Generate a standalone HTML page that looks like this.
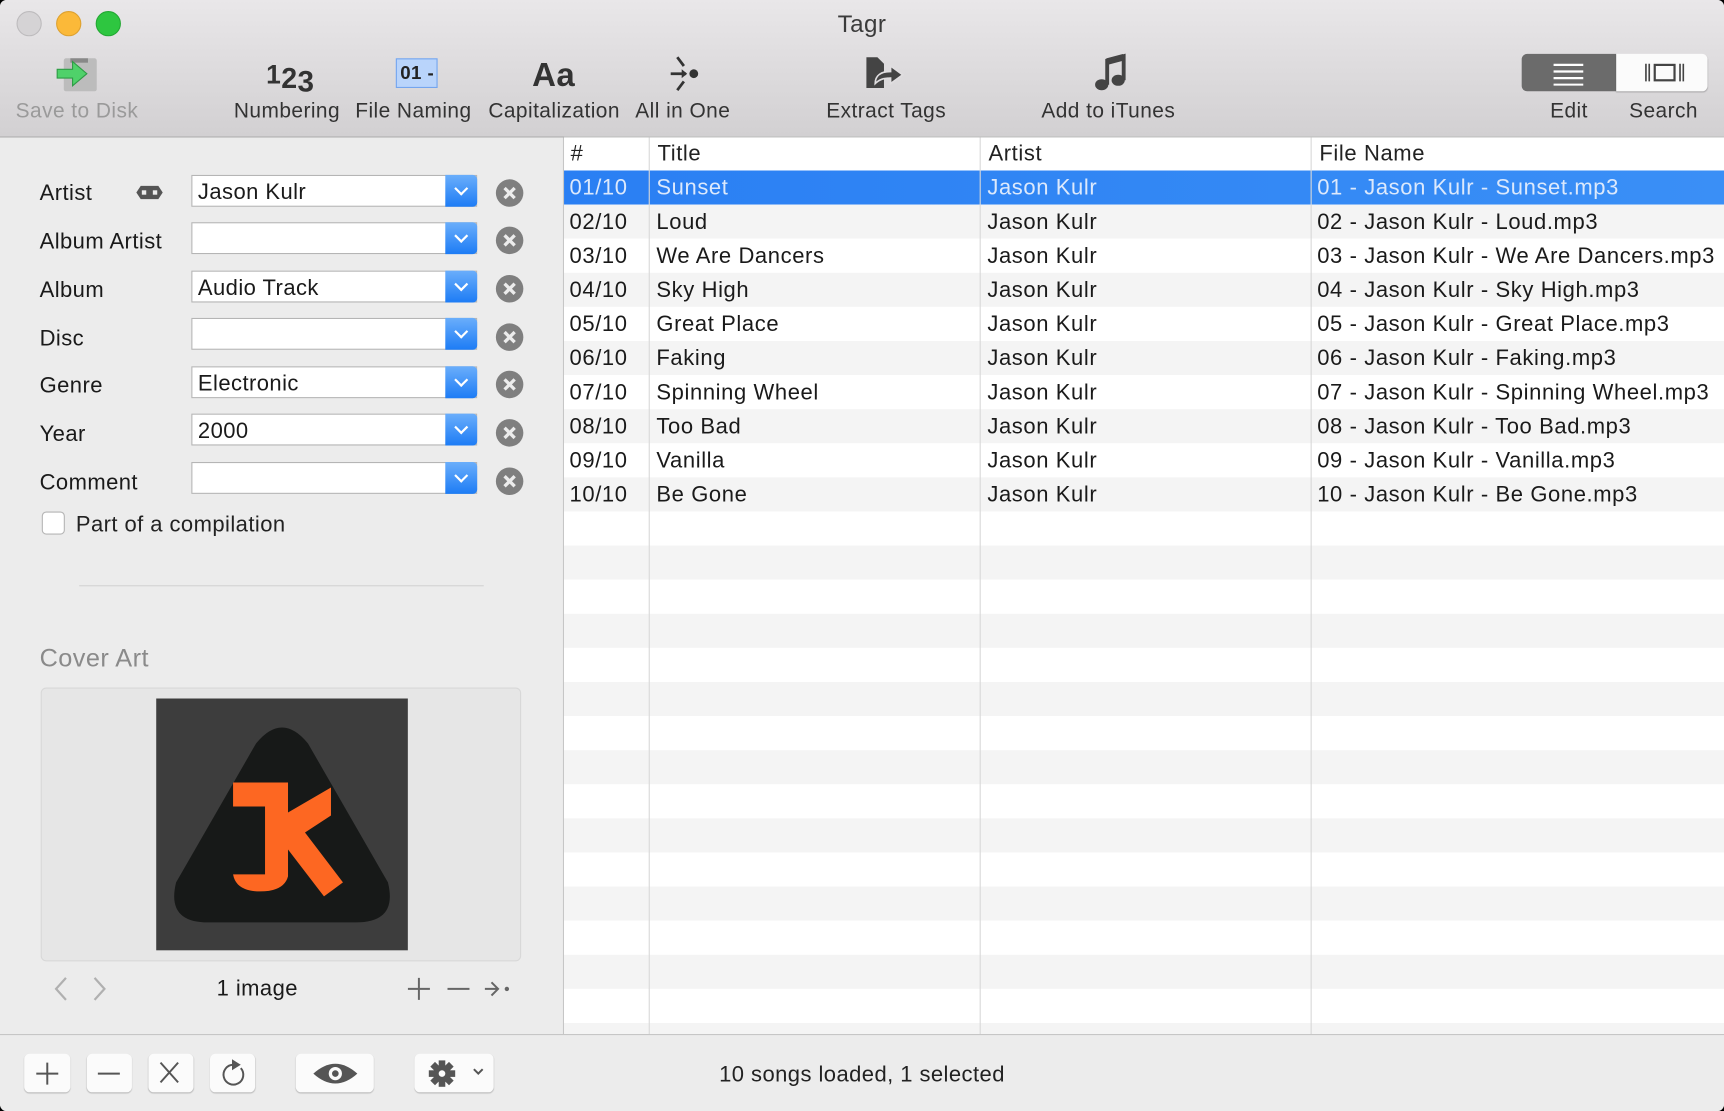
<!DOCTYPE html>
<html><head><meta charset="utf-8"><style>
html,body{margin:0;padding:0;background:#000;overflow:hidden;width:1724px;height:1111px}
#w{position:absolute;left:0;top:0;width:1568px;height:1010px;transform:scale(1.09949,1.1);transform-origin:0 0;background:#ececec;font-family:"Liberation Sans",sans-serif;color:#1a1a1a;overflow:hidden;border-radius:6px 6px 6px 6px;letter-spacing:0.4px}
.a{position:absolute}
#tb{left:0;top:0;width:1568px;height:124px;background:linear-gradient(#e9e7e9,#d2d0d2);border-bottom:1px solid #adadad}
.light{width:22px;height:22px;border-radius:50%;top:10px}
.tl{font-size:19px;color:#333;text-align:center;white-space:nowrap}
.lbl{font-size:20px;left:36px}
.fld{left:174px;width:260px;height:29px;background:#fff;border:1px solid #b5b5b5;box-sizing:border-box;font-size:20px;line-height:31px;padding-left:5px}
.drop{position:absolute;right:-1px;top:-1px;width:29px;height:29px;border-radius:0 4px 4px 0;background:linear-gradient(#6aaefb,#1d7cf5)}
.drop:after{content:"";position:absolute;left:10px;top:8px;width:7px;height:7px;border-right:2px solid #fff;border-bottom:2px solid #fff;transform:rotate(45deg)}
.clr{left:451px;width:25px;height:25px;border-radius:50%;background:#7f7f7f}
.clr:before,.clr:after{content:"";position:absolute;left:6px;top:11px;width:13px;height:3px;background:#ececec;transform:rotate(45deg)}
.clr:after{transform:rotate(-45deg)}
.row{position:absolute;left:513px;width:1055px;height:31px;font-size:20px;line-height:33px;white-space:nowrap;letter-spacing:0.55px}
.row span{position:absolute;top:0}
.vl{position:absolute;top:125px;width:1px;height:815px;background:#d8d8d8}
.bb{top:958px;height:35px;background:#fbfbfb;border-radius:5px;box-shadow:0 1px 1px rgba(0,0,0,.2)}
</style></head><body><div id="w">
<div id="tb" class="a"></div>
<div class="a light" style="left:15px;background:#d5d3d5;border:1px solid #bdbbbd;width:21px;height:21px"></div>
<div class="a light" style="left:51px;background:#fbb939;border:1px solid #dda130;width:21px;height:21px"></div>
<div class="a light" style="left:87px;background:#2ec640;border:1px solid #23a833;width:21px;height:21px"></div>
<div class="a" style="left:0;width:1568px;top:9px;text-align:center;font-size:22px;color:#3b3b3b">Tagr</div>
<svg class="a" style="left:50px;top:50px" width="42" height="36"><rect x="8" y="3" width="30" height="30" rx="2" fill="#bcbcbc"/><rect x="14" y="3" width="16" height="4" fill="#888"/><path d="M2 13h14v-7l13 11-13 11v-7H2z" fill="#4fd16a" stroke="#2e9b45"/></svg>
<div class="a" style="left:242px;top:52px;font-size:24px;color:#333;font-weight:bold">1<span style="font-size:26px;position:relative;top:4px">2</span><span style="font-size:27px;position:relative;top:7px">3</span></div>
<div class="a" style="left:360px;top:53px;width:38px;height:27px;background:#b9d4fb;border:1px solid #74a5ee;box-sizing:border-box;font-size:17px;line-height:25px;padding-left:3px;font-weight:bold;color:#222">01 -</div>
<div class="a" style="left:484px;top:52px;font-size:30px;font-weight:bold;color:#333">Aa</div>
<svg class="a" style="left:606px;top:48px" width="32" height="38"><path d="M10 4l6 8M10 34l6-8M4 19h14" stroke="#333" stroke-width="2.5" fill="none"/><path d="M14 15l5 4-5 4z" fill="#333"/><circle cx="25" cy="19" r="4" fill="#333"/></svg>
<svg class="a" style="left:786px;top:50px" width="40" height="32"><path d="M2 2h10l6 6v22H2z" fill="#444"/><path d="M10 26c0-8 6-11 14-11v-5l11 8-11 8v-5c-6 0-10 1-14 5z" fill="#444" stroke="#e0dee0" stroke-width="1.5"/></svg>
<svg class="a" style="left:992px;top:48px" width="36" height="36"><path d="M15 29V7l15-4v22" stroke="#444" stroke-width="3.5" fill="none"/><path d="M15 8l15-4" stroke="#444" stroke-width="6"/><ellipse cx="10" cy="29" rx="6" ry="5" fill="#444"/><ellipse cx="25" cy="25" rx="6" ry="5" fill="#444"/></svg>
<div class="a tl" style="left:0;width:140px;top:91px;color:#9a9a9a">Save to Disk</div>
<div class="a tl" style="left:201px;width:120px;top:91px">Numbering</div>
<div class="a tl" style="left:316px;width:120px;top:91px">File Naming</div>
<div class="a tl" style="left:434px;width:140px;top:91px">Capitalization</div>
<div class="a tl" style="left:566px;width:110px;top:91px">All in One</div>
<div class="a tl" style="left:736px;width:140px;top:91px">Extract Tags</div>
<div class="a tl" style="left:938px;width:140px;top:91px">Add to iTunes</div>
<div class="a" style="left:1384px;top:49px;width:86px;height:34px;background:#6b6b6b;border-radius:5px 0 0 5px"></div>
<div class="a" style="left:1470px;top:49px;width:83px;height:34px;background:#fbfbfb;border-radius:0 5px 5px 0;box-shadow:0 1px 1px rgba(0,0,0,.2)"></div>
<svg class="a" style="left:1412px;top:56px" width="30" height="22"><path d="M1 3h27M1 9h27M1 15h27M1 21h27" stroke="#fff" stroke-width="2"/></svg>
<svg class="a" style="left:1496px;top:56px" width="36" height="20"><path d="M1 2v16M4 2v16M32 2v16M35 2v16" stroke="#444" stroke-width="1.5"/><rect x="9" y="3" width="18" height="14" fill="none" stroke="#444" stroke-width="2"/></svg>
<div class="a tl" style="left:1384px;width:86px;top:91px">Edit</div>
<div class="a tl" style="left:1470px;width:86px;top:91px">Search</div>

<div class="a" style="left:512px;top:125px;width:1px;height:815px;background:#c6c6c6"></div>
<div class="a lbl" style="top:165px">Artist</div>
<svg class="a" style="left:121px;top:166px" width="30" height="18"><path d="M3 9l4-6h16l4 6-4 6H7z" fill="#555"/><rect x="8" y="7" width="14" height="4" fill="#ececec"/><rect x="12" y="5" width="6" height="8" fill="#555"/></svg>
<div class="a lbl" style="top:209px">Album Artist</div>
<div class="a lbl" style="top:253px">Album</div>
<div class="a lbl" style="top:297px">Disc</div>
<div class="a lbl" style="top:340px">Genre</div>
<div class="a lbl" style="top:384px">Year</div>
<div class="a lbl" style="top:428px">Comment</div>
<div class="a fld" style="top:159px">Jason Kulr<div class="drop"></div></div>
<div class="a fld" style="top:202px"><div class="drop"></div></div>
<div class="a fld" style="top:246px">Audio Track<div class="drop"></div></div>
<div class="a fld" style="top:289px"><div class="drop"></div></div>
<div class="a fld" style="top:333px">Electronic<div class="drop"></div></div>
<div class="a fld" style="top:376px">2000<div class="drop"></div></div>
<div class="a fld" style="top:420px"><div class="drop"></div></div>
<div class="a clr" style="top:163px"></div>
<div class="a clr" style="top:206px"></div>
<div class="a clr" style="top:250px"></div>
<div class="a clr" style="top:294px"></div>
<div class="a clr" style="top:337px"></div>
<div class="a clr" style="top:381px"></div>
<div class="a clr" style="top:425px"></div>
<div class="a" style="left:38px;top:465px;width:21px;height:21px;background:#fff;border:1px solid #b5b5b5;border-radius:4px;box-sizing:border-box"></div>
<div class="a" style="left:69px;top:466px;font-size:20px;color:#222">Part of a compilation</div>
<div class="a" style="left:72px;top:532px;width:368px;height:1px;background:#d3d3d3"></div>
<div class="a" style="left:36px;top:585px;font-size:23px;color:#8a8a8a">Cover Art</div>
<div class="a" style="left:37px;top:625px;width:437px;height:249px;background:#e6e6e6;border:1px solid #d8d8d8;border-radius:5px;box-sizing:border-box"></div>
<svg class="a" style="left:142px;top:635px" width="229" height="229" viewBox="0 0 252 252"><rect width="252" height="252" fill="#3d3d3d"/><path d="M100 45Q126 13 152 45L232 184Q242 224 200 224H52Q10 224 20 184Z" fill="#171918"/><path d="M77 84H132V178Q128 193 104 193Q80 193 77 176H109V108H77ZM132 114L175 89V117L149 134L187 184L168 198L132 151Z" fill="#fd6722"/></svg>
<svg class="a" style="left:44px;top:886px" width="60" height="26"><path d="M16 3L7 13l9 10M42 3l9 10-9 10" stroke="#b0b0b0" stroke-width="2" fill="none"/></svg>
<div class="a" style="left:197px;top:888px;font-size:20px">1 image</div>
<svg class="a" style="left:368px;top:886px" width="100" height="26"><path d="M13 3v20M3 13h20M39 13h20M73 13h12M79 7l6 6-6 6" stroke="#666" stroke-width="1.8" fill="none"/><circle cx="93" cy="13" r="2" fill="#666"/></svg>

<div class="a" style="left:513px;top:125px;width:1055px;height:815px;background:#fff"></div>
<div class="a" style="left:513px;top:155px;width:1055px;height:1px;background:#d8d8d8"></div>
<div class="a" style="left:513px;top:124px;width:1055px;height:1px;background:#c0c0c0"></div>
<div id="rows"></div>
<div class="vl" style="left:590px"></div><div class="vl" style="left:891px"></div><div class="vl" style="left:1192px"></div>
<div class="row" style="top:125px;height:30px;line-height:31px;color:#222"><span style="left:6px">#</span><span style="left:85px">Title</span><span style="left:386px">Artist</span><span style="left:687px">File Name</span></div>
<script>
var d=[["Sunset"],["Loud"],["We Are Dancers"],["Sky High"],["Great Place"],["Faking"],["Spinning Wheel"],["Too Bad"],["Vanilla"],["Be Gone"]];
var h="";
for(var i=0;i<26;i++){var t=155+i*31;var bg=i==0?"linear-gradient(90deg,#2a7ff3,#3a8ff6)":(i%2?"#f4f4f4":"#fff");var ht=Math.min(31,940-t);
h+='<div class="row" style="top:'+t+'px;height:'+ht+'px;background:'+bg+(i==0?';color:#dce9fc':'')+'">';
if(i<10){var n=(i<9?"0":"")+(i+1);h+='<span style="left:5px">'+n+'/10</span><span style="left:84px">'+d[i][0]+'</span><span style="left:385px">Jason Kulr</span><span style="left:685px">'+n+' - Jason Kulr - '+d[i][0]+'.mp3</span>';}
h+='</div>';}
document.getElementById("rows").outerHTML=h;
</script>

<div class="a" style="left:0;top:940px;width:1568px;height:70px;background:#ececec;border-top:1px solid #c6c6c6"></div>
<div class="a bb" style="left:22px;width:42px"></div>
<div class="a bb" style="left:79px;width:41px"></div>
<div class="a bb" style="left:135px;width:41px"></div>
<div class="a bb" style="left:191px;width:41px"></div>
<div class="a bb" style="left:269px;width:71px"></div>
<div class="a bb" style="left:377px;width:72px"></div>
<svg class="a" style="left:22px;top:958px" width="430" height="35"><g stroke="#555" stroke-width="1.8" fill="none"><path d="M21 8v20M11 18h20M67 18h20M124 8l16 18M140 8l-16 18"/><path d="M190 10A9 9 0 1 0 197 13"/></g><path d="M189 5l8 5-8 5z" fill="#555"/><path d="M263 18q20-18 40 0q-20 18-40 0z" fill="#555"/><circle cx="283" cy="18" r="6" fill="#fbfbfb"/><circle cx="283" cy="18" r="3" fill="#555"/><g transform="translate(380 18)" fill="#555"><circle r="8"/><g><rect x="-3" y="-12" width="6" height="24"/><rect x="-12" y="-3" width="24" height="6"/></g><g transform="rotate(45)"><rect x="-3" y="-12" width="6" height="24"/><rect x="-12" y="-3" width="24" height="6"/></g><circle r="3" fill="#fbfbfb"/></g><path d="M409 14l4 4 4-4" stroke="#555" stroke-width="1.8" fill="none"/></svg>
<div class="a" style="left:0;width:1568px;top:966px;text-align:center;font-size:20px;color:#222">10 songs loaded, 1 selected</div>
</div></body></html>
